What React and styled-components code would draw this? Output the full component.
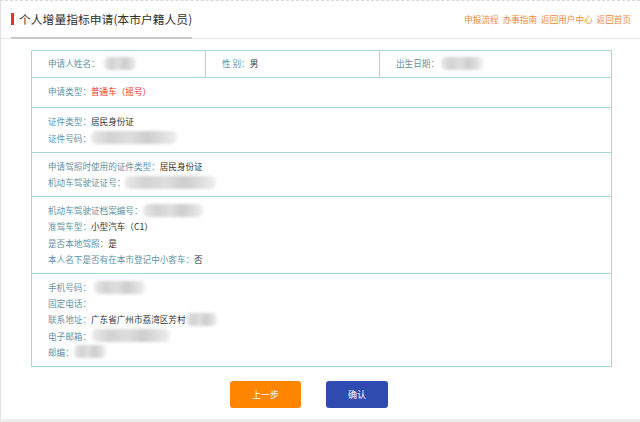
import React from "react";
import styled, { createGlobalStyle } from "styled-components";

const Global = createGlobalStyle`
  html, body { margin: 0; padding: 0; background: #ececec; }
  body { font-family: "Noto Sans CJK SC", "Noto Sans", sans-serif; }
`;

const LINE = "#a7d7dd";

const Page = styled.div`
  width: 640px;
  height: 419px;
  box-sizing: border-box;
  background: #fff;
  border-top: 1px dashed #d8d8d8;
  border-left: 1px solid #e0e0e0;
`;

const Header = styled.header`
  height: 38px;
  box-sizing: border-box;
  display: flex;
  align-items: stretch;
  justify-content: space-between;
  border-bottom: 1px solid #e6e6e6;
`;

const TitleBox = styled.div`
  margin-left: 10px;
  width: 181px;
  display: flex;
  align-items: center;
  border-bottom: 2px solid #c9c9c9;
  margin-bottom: -1px;
`;

const TitleBar = styled.span`
  width: 3px;
  height: 12px;
  background: #e8322b;
  margin-right: 5px;
  flex: none;
`;

const TitleText = styled.h1`
  margin: 0;
  font-size: 11.8px;
  font-weight: normal;
  color: #333;
  white-space: nowrap;
  line-height: 16px;
`;

const Links = styled.nav`
  display: flex;
  align-items: center;
  gap: 4px;
  padding-right: 9px;
  padding-bottom: 1px;
`;

const Link = styled.a`
  font-size: 8.6px;
  color: #ef8a3b;
  text-decoration: none;
  white-space: nowrap;
`;

const Table = styled.div`
  margin: 11px 0 0 30px;
  width: 581px;
  box-sizing: border-box;
  border: 1px solid ${LINE};
`;

const GridRow = styled.div`
  display: grid;
  grid-template-columns: 174px 174px 1fr;
`;

const Cell = styled.div`
  box-sizing: border-box;
  padding: 4px 0 6px 16px;
  border-right: ${(p) => (p.$last ? "none" : `1px solid ${LINE}`)};
`;

const Section = styled.div`
  border-top: 1px solid ${LINE};
  padding: ${(p) => p.$pad || "5px 0 6px 16px"};
`;

const Line = styled.div`
  font-size: 8.6px;
  line-height: 16.2px;
  white-space: nowrap;
  display: flex;
  align-items: center;
`;

const Label = styled.span`
  color: #5f92a5;
`;

const Value = styled.span`
  color: ${(p) => (p.$red ? "#f5302e" : "#333")};
`;

const Blur = styled.span`
  display: inline-block;
  height: 13px;
  margin-left: ${(p) => p.$ml ?? 1}px;
  border-radius: 5px;
  background: linear-gradient(
    90deg,
    #eaeaea 0%,
    #d2d2d2 22%,
    #dedede 45%,
    #cdcdcd 65%,
    #dcdcdc 82%,
    #efefef 100%
  );
  filter: blur(1.6px);
`;

const Actions = styled.div`
  margin-top: 14px;
  display: flex;
  justify-content: center;
  gap: 25px;
  padding-right: 23px;
`;

const Button = styled.button`
  height: 27px;
  width: ${(p) => p.$w}px;
  border: none;
  border-radius: 3px;
  background: ${(p) => p.$bg};
  color: #fff;
  font-family: inherit;
  font-size: 9px;
  padding: 0;
  cursor: pointer;
`;

export default function App() {
  return (
    <>
      <Global />
      <Page>
        <Header>
          <TitleBox>
            <TitleBar />
            <TitleText>个人增量指标申请(本市户籍人员)</TitleText>
          </TitleBox>
          <Links>
            <Link href="#">申报流程</Link>
            <Link href="#">办事指南</Link>
            <Link href="#">返回用户中心</Link>
            <Link href="#">返回首页</Link>
          </Links>
        </Header>

        <Table>
          <GridRow>
            <Cell>
              <Line>
                <Label>申请人姓名：</Label>
                <Blur style={{ width: 32 }} $ml={4} />
              </Line>
            </Cell>
            <Cell>
              <Line>
                <Label>性 别：</Label>
                <Value>男</Value>
              </Line>
            </Cell>
            <Cell $last>
              <Line>
                <Label>出生日期：</Label>
                <Blur style={{ width: 42 }} $ml={2} />
              </Line>
            </Cell>
          </GridRow>

          <Section $pad="5px 0 8px 16px">
            <Line>
              <Label>申请类型：</Label>
              <Value $red>普通车（摇号）</Value>
            </Line>
          </Section>

          <Section>
            <Line>
              <Label>证件类型：</Label>
              <Value>居民身份证</Value>
            </Line>
            <Line>
              <Label>证件号码：</Label>
              <Blur style={{ width: 86 }} $ml={0} />
            </Line>
          </Section>

          <Section>
            <Line>
              <Label>申请驾照时使用的证件类型：</Label>
              <Value>居民身份证</Value>
            </Line>
            <Line>
              <Label>机动车驾驶证证号：</Label>
              <Blur style={{ width: 91 }} $ml={0} />
            </Line>
          </Section>

          <Section>
            <Line>
              <Label>机动车驾驶证档案编号：</Label>
              <Blur style={{ width: 60 }} $ml={0} />
            </Line>
            <Line>
              <Label>准驾车型：</Label>
              <Value>小型汽车（C1）</Value>
            </Line>
            <Line>
              <Label>是否本地驾照：</Label>
              <Value>是</Value>
            </Line>
            <Line>
              <Label>本人名下是否有在本市登记中小客车：</Label>
              <Value>否</Value>
            </Line>
          </Section>

          <Section>
            <Line>
              <Label>手机号码：</Label>
              <Blur style={{ width: 51 }} $ml={3} />
            </Line>
            <Line>
              <Label>固定电话：</Label>
            </Line>
            <Line>
              <Label>联系地址：</Label>
              <Value>广东省广州市荔湾区芳村</Value>
              <Blur style={{ width: 31 }} $ml={0} />
            </Line>
            <Line>
              <Label>电子邮箱：</Label>
              <Blur style={{ width: 78 }} $ml={1} />
            </Line>
            <Line>
              <Label>邮编：</Label>
              <Blur style={{ width: 32 }} $ml={0} />
            </Line>
          </Section>
        </Table>

        <Actions>
          <Button $w={71} $bg="#ff8500">上一步</Button>
          <Button $w={62} $bg="#2f4bb0">确认</Button>
        </Actions>
      </Page>
    </>
  );
}
